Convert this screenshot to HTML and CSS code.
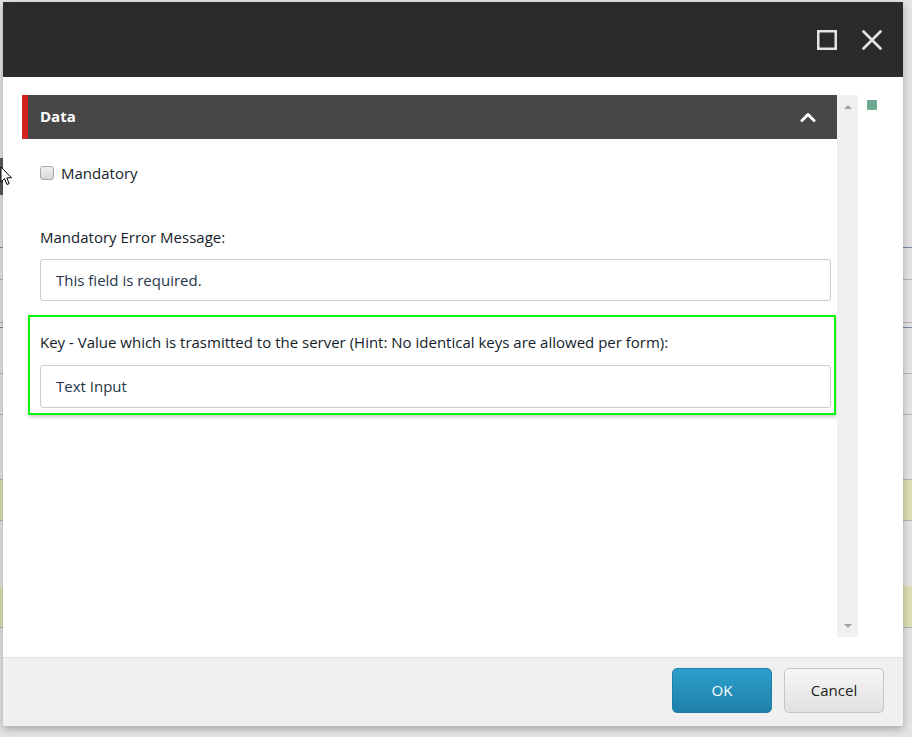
FILE: index.html
```html
<!DOCTYPE html>
<html>
<head>
<meta charset="utf-8">
<link rel="stylesheet" href="styles.css">
</head>
<body>
<div class="backdrop">
  <div class="bg-row r1"></div>
  <div class="bg-row r2"></div>
  <div class="bg-row r3"></div>
  <div class="bg-row r4"></div>
  <div class="bg-row r5"></div>
  <div class="bg-row r6"></div>
  <div class="bg-row r7"></div>
  <div class="bg-row r8 yellow"></div>
  <div class="bg-row r9"></div>
  <div class="bg-row r10 yellow"></div>
  <div class="bg-row r11"></div>
</div>
<div class="side-tab"></div>
<svg class="cursor" width="13" height="21" viewBox="0 0 13 21">
  <path d="M1 1 L1 16 L4.5 12.5 L7 18.5 L9.2 17.6 L6.8 11.8 L11.5 11.8 Z" fill="#fff" stroke="#000" stroke-width="1" stroke-linejoin="miter"/>
</svg>

<div class="dialog">
  <div class="titlebar">
    <svg class="tb-icon" width="20" height="20" viewBox="0 0 20 20">
      <rect x="1.25" y="1.25" width="17.5" height="17.5" fill="none" stroke="#e4e4e4" stroke-width="2.5"/>
    </svg>
    <svg class="tb-icon" width="20" height="20" viewBox="0 0 20 20">
      <path d="M1.5 1.5 L18.5 18.5 M18.5 1.5 L1.5 18.5" stroke="#e4e4e4" stroke-width="2.6" stroke-linecap="round"/>
    </svg>
  </div>
  <div class="body">
    <div class="panel">
      <div class="panel-head">
        <span class="panel-title">Data</span>
        <svg class="chevron" width="16" height="10" viewBox="0 0 16 10">
          <path d="M2 8.5 L8 2.5 L14 8.5" fill="none" stroke="#fff" stroke-width="3" stroke-linecap="round" stroke-linejoin="round"/>
        </svg>
      </div>
      <div class="panel-content">
        <label class="check-row">
          <span class="checkbox"></span>
          <span class="check-label">Mandatory</span>
        </label>
        <div class="field">
          <div class="field-label">Mandatory Error Message:</div>
          <div class="input">This field is required.</div>
        </div>
        <div class="field highlighted">
          <div class="field-label">Key - Value which is trasmitted to the server (Hint: No identical keys are allowed per form):</div>
          <div class="input">Text Input</div>
        </div>
      </div>
    </div>
    <div class="scrollbar">
      <span class="arrow up"></span>
      <span class="arrow down"></span>
    </div>
    <div class="side">
      <span class="marker"></span>
    </div>
  </div>
  <div class="footer">
    <button class="btn btn-ok">OK</button>
    <button class="btn btn-cancel">Cancel</button>
  </div>
</div>
</body>
</html>
```
FILE: styles.css
```css
* { box-sizing: border-box; }
html, body { margin: 0; padding: 0; }
body {
  width: 912px;
  height: 737px;
  overflow: hidden;
  background: #e3e3e3;
  font-family: "Open Sans", "Liberation Sans", sans-serif;
  position: relative;
}
.backdrop { width: 100%; }
.bg-row { border-bottom: 1px solid #b4b4b4; background: #e4e4e4; }
.r1 { height: 248px; border-bottom-color: #7a889b; }
.r2 { height: 32px; }
.r3 { height: 43px; }
.r4 { height: 5px; border-bottom-color: #7a889b; }
.r5 { height: 46px; }
.r6 { height: 41px; }
.r7 { height: 65px; }
.r8 { height: 41px; }
.r9 { height: 65px; border-bottom: none; }
.r10 { height: 42px; }
.r11 { height: 120px; border-bottom: none; }
.yellow { background: #dfe0b4; }

.side-tab {
  position: absolute;
  left: 0; top: 158px;
  width: 3px; height: 37px;
  background: #5a5a5a;
}
.cursor { position: absolute; left: 0; top: 166px; z-index: 5; }

.dialog {
  position: absolute;
  left: 3px; top: 2px;
  width: 900px; height: 724px;
  background: #fff;
  box-shadow: 0 3px 8px rgba(0,0,0,0.28);
  display: flex;
  flex-direction: column;
}
.titlebar {
  height: 75px;
  background: #2b2b2b;
  display: flex;
  justify-content: flex-end;
  align-items: flex-start;
  padding: 28px 21px 0 0;
  gap: 25px;
  flex: none;
}
.tb-icon { display: block; }

.body {
  flex: 1;
  display: flex;
  padding: 18px 0 20px 19px;
  min-height: 0;
}
.panel { width: 815px; flex: none; }
.panel-head {
  height: 44px;
  background: #474747;
  border-left: 6px solid #d4231e;
  display: flex;
  align-items: center;
  justify-content: space-between;
  padding: 0 21px 0 12px;
}
.panel-title {
  color: #fff;
  font-weight: 700;
  font-size: 15px;
  margin-top: -2px;
}
.chevron { display: block; margin-top: -1px; }

.panel-content { padding: 0 6px 0 18px; color: #131d2a; font-size: 15px; }
.check-row {
  display: flex;
  align-items: center;
  height: 20px;
  margin-top: 24px;
  gap: 7px;
}
.checkbox {
  width: 14px; height: 14px;
  border: 1px solid #a9a9a9;
  border-radius: 3px;
  background: linear-gradient(#f0f0f0, #d8d8d8);
}
.check-label { line-height: 20px; }

.field { margin-top: 44px; }
.field-label { line-height: 20px; height: 20px; }
.input {
  margin-top: 12px;
  height: 42px;
  border: 1px solid #cccccc;
  border-radius: 3px;
  padding: 0 15px;
  line-height: 40px;
  color: #24364a;
}
.field.highlighted {
  margin-top: 14px;
  margin-left: -12px;
  width: 808px;
  height: 100px;
  border: 2px solid #0cf50c;
  box-shadow: 1px 2px 4px rgba(0,0,0,0.22);
  padding: 15px 3px 0 10px;
}
.field.highlighted .input { margin-top: 13px; height: 43px; line-height: 41px; }

.scrollbar {
  width: 21px;
  flex: none;
  background: #f0f0f0;
  position: relative;
  display: flex;
  flex-direction: column;
  justify-content: space-between;
  align-items: center;
  padding: 10px 0 9px;
}
.arrow { width: 0; height: 0; border-left: 4px solid transparent; border-right: 4px solid transparent; }
.arrow.up { border-bottom: 4px solid #a3a3a3; }
.arrow.down { border-top: 4px solid #a3a3a3; }
.side { flex: 1; padding: 5px 0 0 9px; }
.marker {
  display: block;
  width: 10px; height: 10px;
  background: #6da88f;
  border-radius: 1px;
}

.footer {
  height: 69px;
  flex: none;
  background: #f0f0f0;
  border-top: 1px solid #e0e0e0;
  display: flex;
  justify-content: flex-end;
  align-items: flex-start;
  padding: 10px 19px 0 0;
  gap: 12px;
}
.btn {
  width: 100px; height: 45px;
  border-radius: 5px;
  font-family: "Open Sans", "Liberation Sans", sans-serif;
  font-size: 15px;
  padding: 0 0 2px;
  cursor: pointer;
}
.btn-ok {
  background: linear-gradient(#2c9fcc, #1f80aa);
  border: 1px solid #1f7ea6;
  color: #fff;
}
.btn-cancel {
  background: linear-gradient(#f6f6f6, #e1e1e1);
  border: 1px solid #c6c6c6;
  color: #222;
}
```
